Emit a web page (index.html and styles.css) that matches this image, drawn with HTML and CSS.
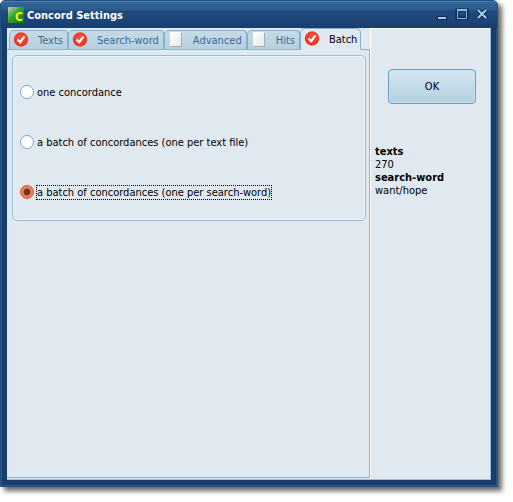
FILE: index.html
```
<!DOCTYPE html>
<html lang="en">
<head>
  <meta charset="UTF-8">
  <meta name="viewport" content="width=device-width, initial-scale=1.0">
  <title>Concord Settings</title>
  <link rel="stylesheet" href="styles.css">
</head>
<body>

  <!-- shared tab icons -->
  <svg class="defs" width="0" height="0" aria-hidden="true">
    <defs>
      <radialGradient id="red" cx="50%" cy="40%" r="60%">
        <stop offset="0" stop-color="#f8553f"/>
        <stop offset="1" stop-color="#e8301f"/>
      </radialGradient>
      <linearGradient id="paper" x1="0" y1="0" x2="1" y2="1">
        <stop offset="0" stop-color="#ffffff"/>
        <stop offset="1" stop-color="#e8e8ea"/>
      </linearGradient>
      <symbol id="check" viewBox="0 0 16 16">
        <circle cx="8" cy="7.500" r="7.200" fill="url(#red)"/>
        <path d="M4.500 7.600l2.600 2.700 4.400-6" fill="none" stroke="#fff" stroke-width="2.100"/>
      </symbol>
      <symbol id="page" viewBox="0 0 16 16">
        <path d="M3 1h11v14h-11z" fill="#a2b0ba"/>
        <path d="M2 0h11v14h-11z" fill="url(#paper)"/>
      </symbol>
    </defs>
  </svg>

  <main class="window">
    <header class="titlebar">
      <svg class="logo" width="16" height="16" viewBox="0 0 16 16" aria-hidden="true">
        <defs>
          <linearGradient id="green" x1="0" y1="0" x2="1" y2="1">
            <stop offset="0" stop-color="#b2dfa8"/>
            <stop offset="0.45" stop-color="#2fa32b"/>
            <stop offset="1" stop-color="#067806"/>
          </linearGradient>
        </defs>
        <rect width="16" height="16" rx="1" fill="url(#green)"/>
        <path d="M3 2h2M6 2h2M4 3h1M7 3h1" stroke="#d88a78"/>
        <text class="logo-letter" x="7" y="14">C</text>
      </svg>
      <h1>Concord Settings</h1>
      <div class="controls">
        <button type="button" aria-label="Minimize">
          <svg width="12" height="12" viewBox="0 0 12 12"><path d="M1 10h10" stroke="#0d2b54" stroke-width="4"/><path d="M2 10h8" stroke="#a9cde8" stroke-width="2"/></svg>
        </button>
        <button type="button" aria-label="Maximize">
          <svg width="12" height="12" viewBox="0 0 12 12"><path d="M1 2h10v8h-10z" fill="none" stroke="#0d2b54" stroke-width="3"/><path d="M1.500 2v8.500h9v-8.500" fill="none" stroke="#8fb8d8"/><path d="M1 2h10" stroke="#8fb8d8" stroke-width="2"/></svg>
        </button>
        <button type="button" aria-label="Close">
          <svg width="12" height="12" viewBox="0 0 12 12"><path d="M2 2l8 8M10 2l-8 8" stroke="#0d2b54" stroke-width="4"/><path d="M2 2l8 8M10 2l-8 8" stroke="#a9cde8" stroke-width="2"/></svg>
        </button>
      </div>
    </header>

    <div class="content">
      <section class="settings">
        <div class="tabs" role="tablist">
          <button type="button" class="tab" role="tab"><svg class="icon"><use href="#check"/></svg>Texts</button>
          <button type="button" class="tab" role="tab"><svg class="icon"><use href="#check"/></svg>Search-word</button>
          <button type="button" class="tab" role="tab"><svg class="icon"><use href="#page"/></svg>Advanced</button>
          <button type="button" class="tab" role="tab"><svg class="icon"><use href="#page"/></svg>Hits</button>
          <button type="button" class="tab active" role="tab" aria-selected="true"><svg class="icon"><use href="#check"/></svg>Batch</button>
        </div>
        <div class="panel" role="tabpanel">
          <fieldset class="group" aria-label="Batch">
            <label class="option"><input type="radio" name="batch"><span>one concordance</span></label>
            <label class="option"><input type="radio" name="batch"><span>a batch of concordances (one per text file)</span></label>
            <label class="option"><input type="radio" name="batch" checked><span>a batch of concordances (one per search-word)</span></label>
          </fieldset>
        </div>
      </section>

      <aside class="side">
        <button type="button" class="ok">OK</button>
        <dl class="summary">
          <dt>texts</dt>
          <dd>270</dd>
          <dt>search-word</dt>
          <dd>want/hope</dd>
        </dl>
      </aside>
    </div>
  </main>

</body>
</html>
```
FILE: styles.css
```
* {
  box-sizing: border-box;
}
body {
  margin: 0;
  height: 100vh;
  padding: 0 15px 15px 0;
  background: #fff;
  font-family: Tahoma, "DejaVu Sans Condensed", "DejaVu Sans", sans-serif;
  font-size: 11px;
  line-height: 13px;
  color: #000;
}
button {
  font: inherit;
  color: inherit;
}
.defs {
  position: absolute;
}
.window {
  height: 100%;
  display: flex;
  flex-direction: column;
  padding: 0 6px 6px;
  border: 1px solid #205081;
  border-radius: 5px 5px 0 0;
  background: #183c6c;
  box-shadow: inset 0 0 0 1px #28588c, 4px 4px 5px rgba(0, 0, 0, 0.6);
}

/* title bar */
.titlebar {
  flex: none;
  display: flex;
  align-items: center;
  gap: 3px;
  height: 27px;
  margin: 0 -6px;
  padding: 0 7px;
  border-top: 1px solid #4b7ba8;
  border-radius: 4px 4px 0 0;
  background: linear-gradient(#34689a, #2a5a8d 8px, #204b7e 9px, #193e6e);
}
.titlebar h1 {
  flex: 1;
  margin: 0;
  font-size: 11px;
  color: #fff;
}
.logo-letter {
  font: bold 12px "DejaVu Sans Condensed", "DejaVu Sans", sans-serif;
  fill: #f4f412;
}
.controls {
  display: flex;
  gap: 8px;
  padding: 0 2px 2px 0;
}
.controls button {
  width: 12px;
  height: 12px;
  padding: 0;
  border: 0;
  background: none;
}
.controls svg {
  display: block;
  overflow: visible;
}

.content {
  flex: 1;
  display: flex;
  border: solid #9fbfd9;
  border-width: 0 1px 1px 0;
  background: #e1e9f0;
}

/* tabs */
.settings {
  flex: 1;
  display: flex;
  flex-direction: column;
  padding-bottom: 1px;
}
.tabs {
  display: flex;
  align-items: flex-end;
  height: 22px;
  padding-left: 2px;
}
.tab {
  display: flex;
  align-items: center;
  gap: 9px;
  height: 20px;
  margin-right: -1px;
  padding: 0 4px 0 3px;
  border: 1px solid #87b0cd;
  border-right-width: 2px;
  border-radius: 5px 5px 0 0;
  background: linear-gradient(#c5dbe7, #b6d0df);
  color: #3e6a96;
}
.tab.active {
  position: relative;
  height: 22px;
  padding: 0 3px;
  border-right-width: 1px;
  border-bottom-color: #e1e9f0;
  background: #e1e9f0;
  color: #000;
}
.icon {
  width: 16px;
  height: 16px;
}
.panel {
  flex: 1;
  margin-top: -1px;
  padding: 5px 3px 5px 5px;
  border: solid #8fb3d0;
  border-width: 1px 1px 1px 0;
}

/* radio group */
.group {
  display: flex;
  flex-direction: column;
  gap: 34px;
  margin: 0;
  padding: 28px 7px 20px;
  border: 1px solid #9bbbd6;
  border-radius: 5px;
  box-shadow: inset 0 0 0 1px #edf2f6;
}
.option {
  display: flex;
  align-items: center;
  gap: 2px;
  height: 16px;
}
.option input {
  appearance: none;
  width: 14px;
  height: 14px;
  margin: 0;
  border: 1px solid #78a9cf;
  border-radius: 50%;
  background: #fff;
}
.option input:checked {
  border-color: #d8623a;
  background: radial-gradient(circle, #74341f 3px, #f58a62 4px, #ec7048 6px);
}
.option span {
  border: 1px dotted transparent;
}
.option input:checked + span {
  border-color: #000;
}

/* right column */
.side {
  width: 120px;
  padding: 40px 3px 0 4px;
  border-left: 1px solid #fff;
  border-top: 1px solid #fff;
}
.ok {
  display: block;
  width: 88px;
  height: 35px;
  margin: 0 13px 41px;
  border: 1px solid #6d9fc4;
  border-radius: 4px;
  background: linear-gradient(#d5e6ef, #b2d0e1);
  box-shadow: inset 0 0 0 1px #c8dfeb;
}
.summary {
  margin: 0;
}
.summary dt {
  font-weight: bold;
}
.summary dd {
  margin: 0;
}
```
